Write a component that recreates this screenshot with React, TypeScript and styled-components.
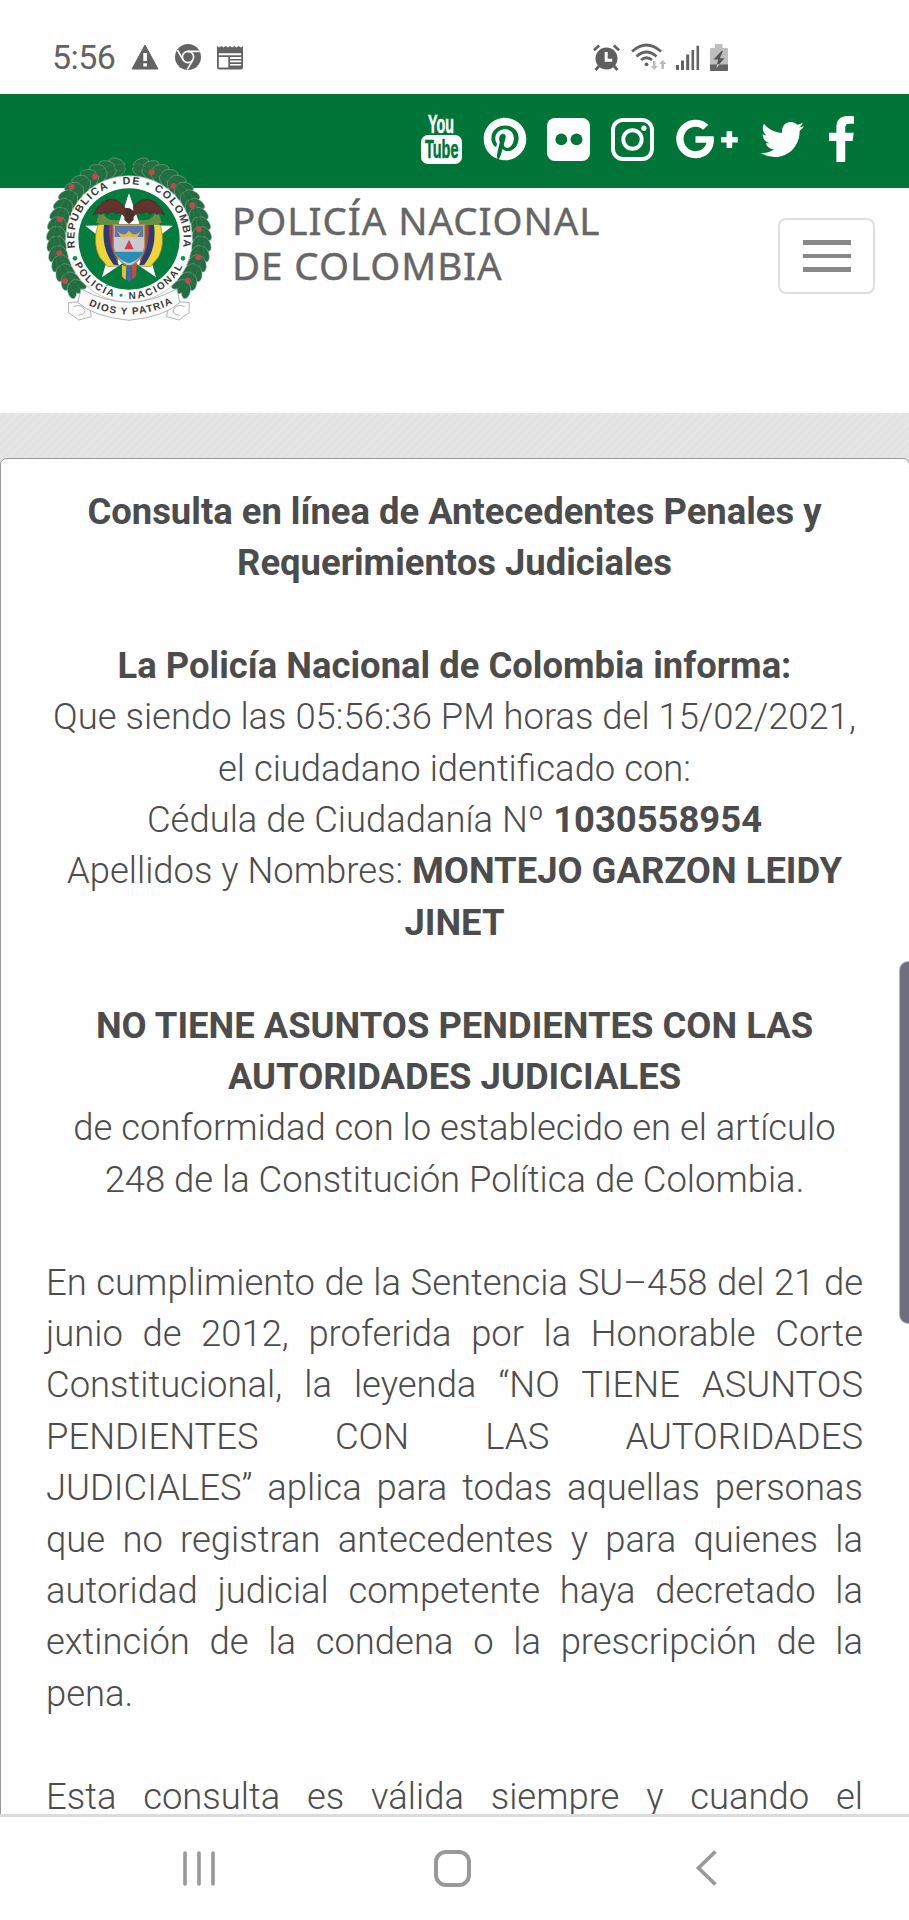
import React from "react";
import styled, { createGlobalStyle } from "styled-components";
import { FaPinterest, FaGooglePlusG, FaTwitter } from "react-icons/fa";

const GlobalStyle = createGlobalStyle`
  * { box-sizing: border-box; }
  body { margin: 0; background: #fff; font-family: Roboto, sans-serif; }
  svg { display: block; flex: none; overflow: visible; }
`;

const Screen = styled.div`
  position: relative;
  width: 909px;
  height: 1920px;
  display: flex;
  flex-direction: column;
  overflow: hidden;
  background: #fefefe;
`;

const StatusBar = styled.header`
  height: 94px;
  flex: none;
  display: flex;
  align-items: flex-start;
  justify-content: space-between;
  padding: 42px 181px 0 52px;
  color: #636363;
`;

const StatusGroup = styled.div<{ $gap: number }>`
  display: flex;
  align-items: center;
  height: 30px;
  gap: ${(p) => p.$gap}px;
`;

const Clock = styled.span`
  font-size: 34px;
  line-height: 30px;
  letter-spacing: -0.6px;
  width: 63px;
`;

const SocialBar = styled.nav`
  height: 94px;
  flex: none;
  background: #007537;
  display: flex;
  justify-content: flex-end;
  align-items: center;
  padding: 0 55px 4px 0;
  color: #fff;
`;

const SocialLink = styled.a<{ $space?: number }>`
  display: flex;
  margin-left: ${(p) => p.$space ?? 21}px;
  color: inherit;
`;

const Brand = styled.section`
  height: 225px;
  flex: none;
  display: flex;
  align-items: flex-start;
  padding: 0 34px 0 45px;
`;

const CrestHolder = styled.div`
  margin-top: -32px;
  width: 168px;
`;

const BrandName = styled.h1`
  margin: 10px 0 0 19px;
  flex: 1;
  font: 400 38.5px/44.5px "Noto Sans", sans-serif;
  letter-spacing: 0.95px;
  color: #666;
  -webkit-text-stroke: 0.4px #666;
  white-space: nowrap;
`;

const MenuButton = styled.button`
  margin-top: 30px;
  width: 97px;
  height: 76px;
  padding: 0;
  border: 2px solid #dedede;
  border-radius: 8px;
  background: transparent;
  display: flex;
  flex-direction: column;
  align-items: center;
  justify-content: center;
  gap: 9px;
`;

const MenuLine = styled.span`
  width: 48px;
  height: 4.4px;
  background: #888;
`;

const Content = styled.main`
  height: 1401px;
  flex: none;
  padding-top: 45px;
  overflow: hidden;
  background: repeating-linear-gradient(135deg, #e5e5e5 0 3px, #e2e2e2 3px 6px);
`;

const Card = styled.article`
  margin-right: -1px;
  height: 1400px;
  padding: 26.6px 46px 0 45px;
  border: 1px solid #999;
  border-radius: 7px;
  background: #fefefe;
  color: #4c4c4c;
  font-size: 36.42px;
  line-height: 51.4px;
  font-weight: 300;
`;

const Paragraph = styled.p<{ $align?: string; $last?: string }>`
  margin: 0 0 51.4px;
  text-align: ${(p) => p.$align ?? "center"};
  text-align-last: ${(p) => p.$last ?? "auto"};
  b { font-weight: 700; }
`;

const NavBar = styled.footer`
  flex: 1;
  border-top: 3px solid #dcdcdc;
  display: flex;
  align-items: flex-start;
  padding: 33px 0 0 182px;
`;

const NavItem = styled.span<{ $width: number }>`
  width: ${(p) => p.$width}px;
`;

const EdgeHandle = styled.div`
  position: absolute;
  right: -8px;
  top: 961px;
  width: 18px;
  height: 363px;
  border: 1px solid #b9b9c2;
  border-radius: 9px;
  background: #6f6e7f;
`;

const AlertIcon = () => (
  <svg width="28" height="26" viewBox="0 0 28 26">
    <path d="M14 1 27 25H1Z" fill="#636363" stroke="#636363" strokeLinejoin="round" />
    <path d="M12.3 9h3.6v8h-3.6zM12.3 19.3h3.6v3.2h-3.6z" fill="#fff" />
  </svg>
);

const ChromeIcon = () => (
  <svg width="26" height="26" viewBox="0 0 26 26">
    <circle cx="13" cy="13" r="13" fill="#636363" />
    <g stroke="#fff" strokeWidth="1.6" fill="none">
      <circle cx="13" cy="13" r="5.6" />
      <path d="M13 7.4h11.7M8.2 16 2.4 6M17.9 15.8 12.2 25.6" />
    </g>
  </svg>
);

const NewsIcon = () => (
  <svg width="26" height="25" viewBox="0 0 26 25">
    <path d="M0 1l2.2 1.6L4.4 1l2.1 1.6L8.7 1l2.1 1.6L13 1l2.2 1.6L17.3 1l2.2 1.6L21.6 1l2.2 1.6L26 1v21.5a2 2 0 0 1-2 2H2a2 2 0 0 1-2-2z" fill="#636363" />
    <path d="M1.8 8.2h22.4v2H1.8zM1.8 12h9.5v10.5H1.8zM13 12h11.2v2H13zM13 15.6h11.2v1.7H13zM13 19h11.2v1.5H13z" fill="#fff" />
  </svg>
);

const AlarmIcon = () => (
  <svg width="27" height="27" viewBox="0 0 27 27">
    <g stroke="#5f5f5f" strokeWidth="2.7" fill="none">
      <path d="M.9 6.3 6.2 1.6M26.1 6.3 20.8 1.6M6 22l-3.5 4M21 22l3.5 4" />
    </g>
    <circle cx="13.5" cy="14.5" r="11" fill="#5f5f5f" />
    <path d="M13.2 8v8.2h6" stroke="#fff" strokeWidth="3" fill="none" />
  </svg>
);

const WifiIcon = () => (
  <svg width="36" height="28" viewBox="-1 0 36 28">
    <g stroke="#636363" strokeWidth="2.7" fill="none">
      <path d="M1 8.5Q15.5-4.5 30 8.5M5.500 13.500q10-9 20 0M10 17q5.500-4.500 11 0" />
    </g>
    <circle cx="15.500" cy="21.300" r="1.900" fill="#636363" />
    <path d="M22 18h2.500v5h2.300L23.300 27l-3.500-4H22zM30.500 26h2.500v-5h2.500L31.800 17l-3.600 4h2.300z" fill="#bbb" />
  </svg>
);

const SignalIcon = () => (
  <svg width="24" height="25" viewBox="0 0 24 25">
    <path d="M0 20h3v5H0zM5 15.500h3V25H5zM10.200 9.500h3V25h-3zM15.500 5h2.600v20h-2.600zM20.500.8h2.600V25h-2.600z" fill="#636363" />
  </svg>
);

const BatteryIcon = () => (
  <svg width="18" height="27" viewBox="0 0 18 27">
    <path d="M5 0h7.500v4H17a1 1 0 0 1 1 1v16H0V5a1 1 0 0 1 1-1h4z" fill="#bebebe" />
    <path d="M0 20.500h18V26a1 1 0 0 1-1 1H1a1 1 0 0 1-1-1z" fill="#636363" />
    <path d="M11.500 7 3.500 15.500h4.700L6 24l8.500-9.700H9.800L13 7z" fill="#555" />
    <path d="m7.300 20.500-1 3.500 3-3.500z" fill="#fff" />
  </svg>
);

const YouTubeIcon = () => (
  <svg width="41" height="50" viewBox="0 0 41 50" fontFamily="Liberation Sans, sans-serif" fontWeight="700">
    <rect x="0" y="21" width="41" height="29" rx="7" fill="#fff" />
    <text x="7" y="18.800" fontSize="26" fill="#fff" stroke="#fff" strokeWidth="0.600" textLength="26" lengthAdjust="spacingAndGlyphs">You</text>
    <text x="4" y="44" fontSize="26" fill="#007537" stroke="#007537" strokeWidth="0.600" textLength="33.500" lengthAdjust="spacingAndGlyphs">Tube</text>
  </svg>
);

const FlickrIcon = () => (
  <svg width="43" height="43" viewBox="0 0 43 43">
    <rect width="43" height="43" rx="8" fill="#fff" />
    <circle cx="14.300" cy="21.400" r="5.900" fill="#007537" />
    <circle cx="29.500" cy="21.400" r="5.900" fill="#007537" />
  </svg>
);

const InstagramIcon = () => (
  <svg width="43" height="43" viewBox="0 0 43 43" fill="none" stroke="#fff" strokeWidth="3.900">
    <rect x="2" y="2" width="39" height="39" rx="10" />
    <circle cx="21.500" cy="21.500" r="9.200" />
    <circle cx="32.900" cy="10.200" r="2.600" fill="#fff" stroke="none" />
  </svg>
);

const FacebookIcon = () => (
  <svg width="25" height="46" viewBox="479 0 864 1664" preserveAspectRatio="none">
    <path fill="#fff" d="M1343 12v264h-157q-86 0-116 36t-30 108v189h293l-39 296h-254v759h-306v-759h-255v-296h255v-218q0-186 104-288.500t277-102.500q147 0 228 12z" />
  </svg>
);

const polar = (r: number, deg: number) => {
  const a = (deg * Math.PI) / 180;
  return [297 + r * Math.sin(a), 300 - r * Math.cos(a)];
};

const leafAngles = Array.from({ length: 17 }, (_, i) => 9 + i * 7.7);
const berries = [
  [365, 97], [430, 138], [487, 196], [507, 268], [505, 352], [474, 422],
  [195, 110], [125, 140], [89, 238], [88, 340], [105, 423],
];

const Wreath = () => (
  <g>
    {[1, -1].map((side) =>
      leafAngles.map((deg) => {
        const rot = side * deg;
        return (
          <g key={rot} transform={`rotate(${rot} 297 297)`} stroke="#8fb09b" strokeWidth="1.500" fill="#226e41">
            <ellipse cx="297" cy="66" rx="24" ry="13" transform={`rotate(${side * -30} 297 66)`} />
            <ellipse cx="297" cy="94" rx="24" ry="12" transform={`rotate(${side * 25} 297 94)`} />
            <ellipse cx="297" cy="80" rx="22" ry="10" stroke="#3f8058" />
          </g>
        );
      }),
    )}
    {berries.map(([x, y]) => (
      <circle key={`${x}-${y}`} cx={x} cy={y} r="9" fill="#c5484e" stroke="#7b5745" strokeWidth="1" />
    ))}
  </g>
);

const star = Array.from({ length: 10 }, (_, i) => polar(i % 2 ? 56 : 138, i * 36).join(",")).join(" ");

const Crest = () => (
  <svg width="168" height="166" viewBox="45 48 504 498">
    <defs>
      <path id="arcTop" d="M136 328A164 164 0 1 1 458 328" />
      <path id="arcBottom" d="M132 369A180 180 0 0 0 462 369" />
      <path id="ribbonText" d="M172 494Q295 554 424 492" />
    </defs>
    <Wreath />
    <circle cx="297" cy="297" r="190" fill="#fdfdfd" stroke="#a9b5ad" strokeWidth="2" />
    <circle cx="297" cy="297" r="152" fill="#047c3d" />
    <polygon points={star} fill="#fff" />
    {/* flags on either side of the shield */}
    {[1, -1].map((s) => (
      <g key={s} transform={`translate(297 0) scale(${s} 1)`}>
        <path d="M52 248 94 255Q110 310 88 352L64 380 32 378Q66 330 52 248Z" fill="#f1d435" stroke="#94803a" strokeWidth="2" />
        <path d="M50 250 75 255Q84 325 46 374L30 376Q54 330 50 250Z" fill="#293c78" />
        <path d="M48 252 59 255Q64 320 32 370Z" fill="#a64040" />
        <path d="M30 240Q62 245 75 225T98 248Q65 262 30 250Z" fill="#648f45" />
        <path d="M4 222Q12 190 40 180Q80 168 108 226Q92 212 84 224Q74 208 64 224Q52 206 40 222Q26 209 8 238Z" fill="#64332f" stroke="#3c2927" strokeWidth="2" />
      </g>
    ))}
    <path d="M250 254H344V322Q337 361 297 380Q257 361 250 322Z" fill="#c7cad0" stroke="#a8904a" strokeWidth="4" />
    <path d="M254 257H340V291H254Z" fill="#5b79a8" />
    <path d="M260 270Q280 295 297 272Q314 295 334 270L322 292H272Z" fill="#ddb64d" />
    <path d="M253 335H341Q329 360 297 370Q265 360 253 335Z" fill="#2b8fb5" />
    <path d="m297 300 14 28h-28z" fill="#d43c40" />
    <path d="M283 240 288 190 297 160 306 190 311 240 297 252Z" fill="#4d3029" />
    <path d="M285 203 291 176 297 160 307 190 310 212 299 205Z" fill="#fff" />
    <path d="M276 374 290 380 287 420 276 410Z" fill="#e5bd39" />
    <path d="M290 376H305V420L297 427 288 416Z" fill="#4168a0" />
    <path d="M305 376 321 368 318 408 307 419Z" fill="#c44d40" />
    <circle cx="135" cy="355" r="7" fill="#159052" />
    <circle cx="459" cy="355" r="7" fill="#159052" />
    <g fill="#fbfbfb" stroke="#b4b4b4" strokeWidth="3">
      <path d="M145 485 115 488 116 519Q135 530 146 540L184 530 180 500ZM449 485 478 488 477 519Q458 530 447 540L410 530 414 500Z" />
      <path d="M154 447Q295 526 440 447L450 487Q405 530 297 541Q190 530 143 487Z" />
      <path d="M130 500Q148 492 160 503Q175 522 145 526M464 500Q446 492 434 503Q419 522 449 526" fill="none" />
    </g>
    <g fontFamily="Liberation Sans, sans-serif" fontWeight="700" fill="#3c3939">
      <text fontSize="32"><textPath href="#arcTop" startOffset="4" textLength="566" lengthAdjust="spacing">REPÚBLICA <tspan fill="#159052">•</tspan> DE <tspan fill="#159052">•</tspan> COLOMBIA</textPath></text>
      <text fontSize="30"><textPath href="#arcBottom" startOffset="4" textLength="402" lengthAdjust="spacing">POLICÍA <tspan fill="#159052">•</tspan> NACIONAL</textPath></text>
      <text fontSize="30"><textPath href="#ribbonText" startOffset="4" textLength="262">DIOS Y PATRIA</textPath></text>
    </g>
  </svg>
);

export default function App() {
  return (
    <>
      <GlobalStyle />
      <Screen>
        <StatusBar>
          <StatusGroup $gap={16}>
            <Clock>5:56</Clock>
            <AlertIcon />
            <ChromeIcon />
            <NewsIcon />
          </StatusGroup>
          <StatusGroup $gap={10}>
            <AlarmIcon />
            <WifiIcon />
            <SignalIcon />
            <BatteryIcon />
          </StatusGroup>
        </StatusBar>

        <SocialBar>
          <SocialLink><YouTubeIcon /></SocialLink>
          <SocialLink $space={21}><FaPinterest size={44} /></SocialLink>
          <SocialLink $space={20}><FlickrIcon /></SocialLink>
          <SocialLink $space={21}><InstagramIcon /></SocialLink>
          <SocialLink $space={21}><FaGooglePlusG size={64} /></SocialLink>
          <SocialLink $space={22}><FaTwitter size={43} /></SocialLink>
          <SocialLink $space={25}><FacebookIcon /></SocialLink>
        </SocialBar>

        <Brand>
          <CrestHolder><Crest /></CrestHolder>
          <BrandName>POLICÍA NACIONAL<br />DE COLOMBIA</BrandName>
          <MenuButton aria-label="Menú"><MenuLine /><MenuLine /><MenuLine /></MenuButton>
        </Brand>

        <Content>
          <Card>
            <Paragraph>
              <b>Consulta en línea de Antecedentes Penales y<br />Requerimientos Judiciales</b>
            </Paragraph>
            <Paragraph>
              <b>La Policía Nacional de Colombia informa:</b><br />
              Que siendo las 05:56:36 PM horas del 15/02/2021,<br />
              el ciudadano identificado con:<br />
              Cédula de Ciudadanía Nº <b>1030558954</b><br />
              Apellidos y Nombres: <b>MONTEJO GARZON LEIDY<br />JINET</b>
            </Paragraph>
            <Paragraph>
              <b>NO TIENE ASUNTOS PENDIENTES CON LAS<br />AUTORIDADES JUDICIALES</b><br />
              de conformidad con lo establecido en el artículo<br />
              248 de la Constitución Política de Colombia.
            </Paragraph>
            <Paragraph $align="justify">
              En cumplimiento de la Sentencia SU–458 del 21 de junio de 2012, proferida por la
              Honorable Corte Constitucional, la leyenda “NO TIENE ASUNTOS PENDIENTES CON LAS
              AUTORIDADES JUDICIALES” aplica para todas aquellas personas que no registran
              antecedentes y para quienes la autoridad judicial competente haya decretado la
              extinción de la condena o la prescripción de la pena.
            </Paragraph>
            <Paragraph $align="justify" $last="justify">
              Esta consulta es válida siempre y cuando el
            </Paragraph>
          </Card>
        </Content>

        <NavBar>
          <NavItem $width={252}>
            <svg width="34" height="36" viewBox="0 0 34 36" stroke="#999" strokeWidth="3.600" strokeLinecap="round">
              <path d="M3 3v31M17 3v31M31 3v31" />
            </svg>
          </NavItem>
          <NavItem $width={262}>
            <svg width="37" height="37" viewBox="0 0 37 37" fill="none" stroke="#999" strokeWidth="4">
              <rect x="2" y="2" width="33" height="33" rx="10" />
            </svg>
          </NavItem>
          <NavItem $width={21}>
            <svg width="21" height="36" viewBox="0 0 21 36" fill="none" stroke="#999" strokeWidth="3.700">
              <path d="M19.500 1.500 2.500 18l17 16.500" />
            </svg>
          </NavItem>
        </NavBar>
        <EdgeHandle />
      </Screen>
    </>
  );
}
